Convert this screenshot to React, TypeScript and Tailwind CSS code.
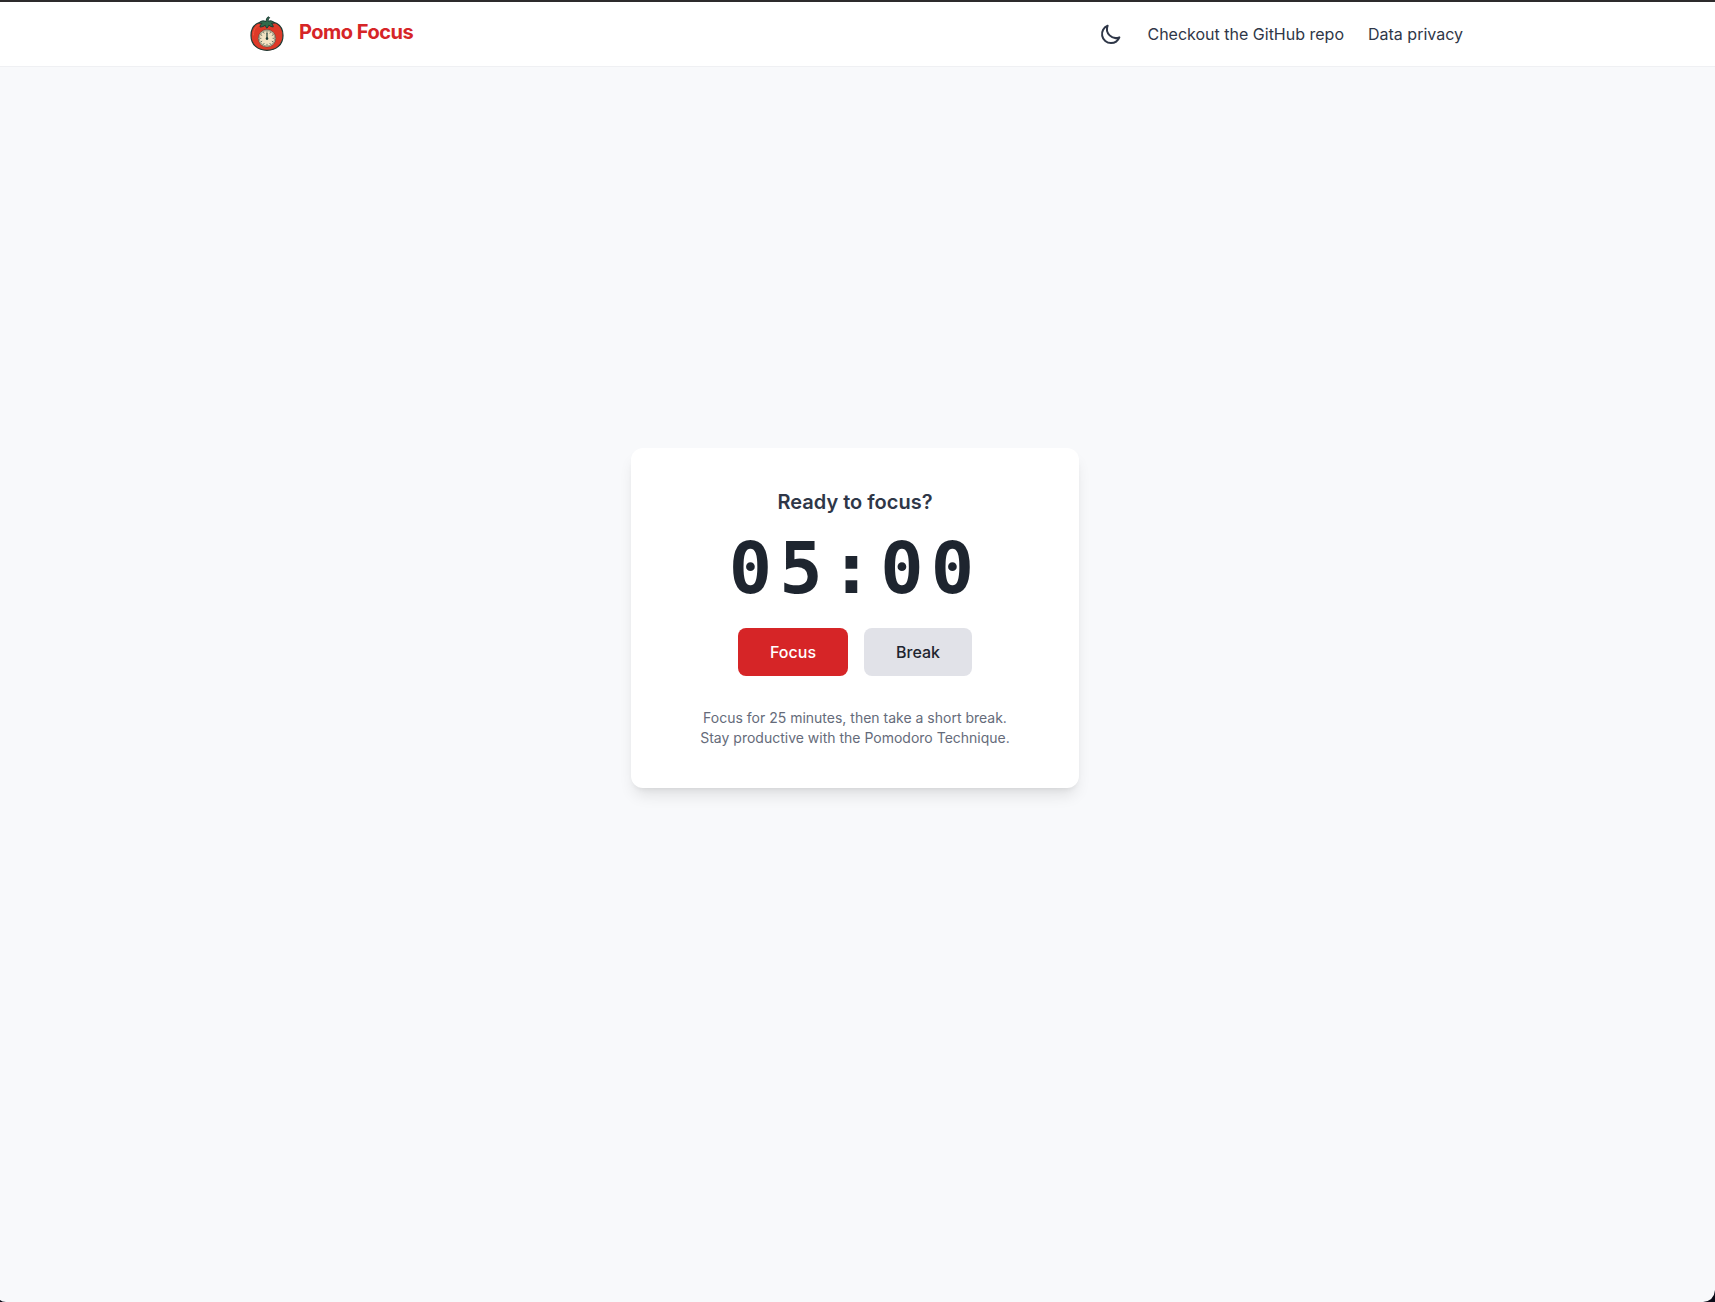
import { useState } from "react";
import { HiOutlineMoon, HiOutlineSun } from "react-icons/hi";

const MODES = {
  focus: { label: "Focus", className: "bg-[#d62527] text-white" },
  break: { label: "Break", className: "bg-[#e1e2e8] text-[#1e252f]" },
};

const NAV_LINKS = [
  { label: "Checkout the GitHub repo", href: "#repo" },
  { label: "Data privacy", href: "#privacy" },
];

const TICKS = [0, 30, 60, 90, 120, 150, 180, 210, 240, 270, 300, 330];

function TomatoLogo() {
  return (
    <svg viewBox="0 0 40 40" className="size-10 shrink-0" aria-hidden="true">
      <path
        d="M20 8.6C15 6.6 4 8.6 4 21.4C4 30.8 11 36.4 20 36.4C29 36.4 36 30.8 36 21.4C36 8.6 25 6.6 20 8.6Z"
        fill="#de3a28"
        stroke="#1d3b35"
        strokeWidth="1.2"
      />
      <path
        d="M6.4 21C6.4 16 8.4 13 11.4 11.4"
        fill="none"
        stroke="#ee5a40"
        strokeWidth="1"
        strokeLinecap="round"
      />
      <path
        d="M19 7.6C19.2 5.6 19.8 4 21 2.8L22.6 3.6C21.6 4.8 21.2 6 21.2 7.4C23.6 6.2 25.6 6.8 27.4 9L24.4 9.4C25.6 10.4 26.2 11.6 26.2 13C24.4 12.8 23 12.2 21.8 11.2C21.4 12.4 20.8 13.4 19.8 14.2C19 13.2 18.4 12.2 18.2 11.2C16.8 12.4 15.2 13 13 13C13.2 11.6 13.8 10.4 15 9.4L11.8 9C13.8 6.8 16.4 6.2 19 7.6Z"
        fill="#2f6b4b"
        stroke="#1d3b35"
        strokeWidth="1"
        strokeLinejoin="round"
      />
      <circle cx="20" cy="24.3" r="8.7" fill="#f3e3c3" stroke="#1d3b35" strokeWidth="0.5" />
      <circle cx="20" cy="24.3" r="7.7" fill="none" stroke="#4b5b4d" strokeWidth="0.5" />
      {TICKS.map((angle) => (
        <path
          key={angle}
          d="M20 17.2V18.7"
          stroke="#1d3b35"
          strokeWidth="0.6"
          transform={`rotate(${angle} 20 24.3)`}
        />
      ))}
      <path d="M20 19.2V24.6" stroke="#1d3b35" strokeWidth="1.2" strokeLinecap="round" />
      <circle cx="20" cy="24.6" r="1.3" fill="#1d3b35" />
    </svg>
  );
}

function Header({ onToggleTheme, dark }: { onToggleTheme: () => void; dark: boolean }) {
  const ThemeIcon = dark ? HiOutlineSun : HiOutlineMoon;

  return (
    <header className="border-b border-[#eff0f3] bg-white pr-[5px]">
      <div className="max-w-7xl h-16 mx-auto px-8 flex items-center justify-between">
        <a href="#home" className="flex items-center gap-3">
          <TomatoLogo />
          <span className="pb-1 text-xl font-bold tracking-tight text-[#d62527]">Pomo Focus</span>
        </a>
        <nav className="flex items-center gap-6 text-[#2f3748]">
          <button onClick={onToggleTheme} title="Toggle theme">
            <ThemeIcon size={24} />
          </button>
          {NAV_LINKS.map((link) => (
            <a key={link.label} href={link.href}>
              {link.label}
            </a>
          ))}
        </nav>
      </div>
    </header>
  );
}

function TimerCard({ onSelect }: { onSelect: (mode: string) => void }) {
  return (
    <section className="w-full max-w-md rounded-xl bg-white p-10 text-center shadow-lg">
      <h1 className="text-xl font-semibold text-[#2f3748]">Ready to focus?</h1>
      <div className="mt-4 font-['DejaVu_Sans_Mono',monospace] text-7xl font-bold tracking-widest text-[#1e252f]">
        05:00
      </div>
      <div className="mt-6 flex justify-center gap-4">
        {Object.entries(MODES).map(([mode, { label, className }]) => (
          <button
            key={mode}
            onClick={() => onSelect(mode)}
            className={`rounded-lg px-8 py-3 font-medium ${className}`}
          >
            {label}
          </button>
        ))}
      </div>
      <p className="mt-8 text-sm text-[#656b7a]">
        Focus for 25 minutes, then take a short break.
        <br />
        Stay productive with the Pomodoro Technique.
      </p>
    </section>
  );
}

export default function App() {
  const [dark, setDark] = useState(false);
  const [, setMode] = useState("focus");

  return (
    <div className="relative min-h-screen flex flex-col border-t-2 border-[#2d2b2c] bg-[#f8f9fb] font-[Inter,sans-serif]">
      <Header dark={dark} onToggleTheme={() => setDark(!dark)} />
      <main className="grow flex items-center justify-center pr-[5px] pb-[134px]">
        <TimerCard onSelect={setMode} />
      </main>
      {/* rounded window corners */}
      <svg viewBox="0 0 6 2" className="absolute bottom-0 left-0 w-1.5 h-0.5" aria-hidden="true">
        <path d="M0 0Q2 2 6 2H0Z" fill="#0b0b18" />
      </svg>
      <svg viewBox="0 0 12 12" className="absolute bottom-0 right-0 size-3" aria-hidden="true">
        <path d="M12 0Q11 11 0 12H12Z" fill="#0b0b18" />
      </svg>
    </div>
  );
}
